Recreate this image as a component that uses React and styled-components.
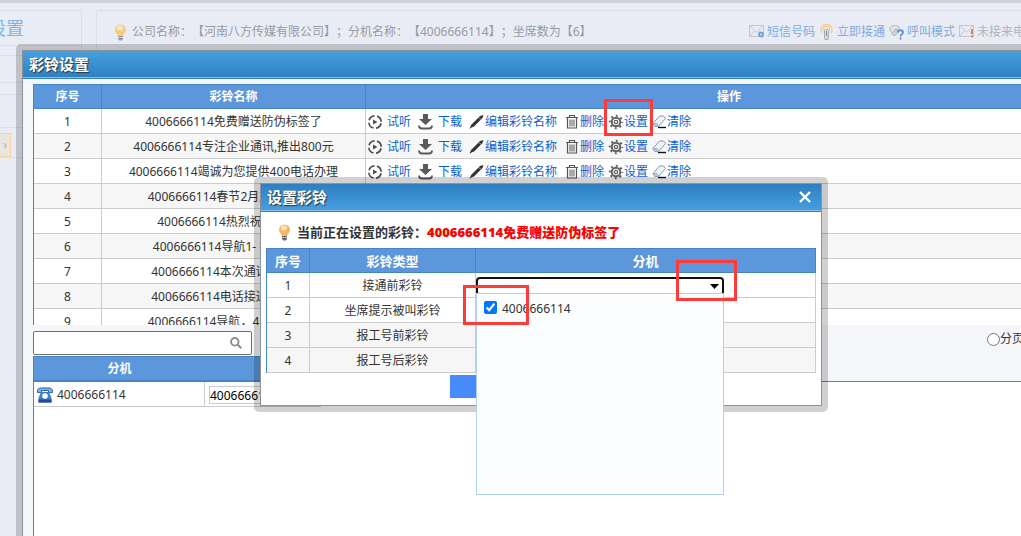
import React from 'react'
import styled, { createGlobalStyle, css } from 'styled-components'

const rings = [
  '4006666114免费赠送防伪标签了',
  '4006666114专注企业通讯,推出800元',
  '4006666114竭诚为您提供400电话办理',
  '4006666114春节2月放假的通知',
  '4006666114热烈祝贺开业啦',
  '4006666114导航1- 按键选择2',
  '4006666114本次通话全程录音',
  '4006666114电话接通请您稍候',
  '4006666114导航，4号键转人工',
]

const ringTypes = ['接通前彩铃', '坐席提示被叫彩铃', '报工号前彩铃', '报工号后彩铃']

const PlayIcon = () => (
  <svg width="16" height="16" viewBox="0 0 16 16" fill="none">
    <circle cx="8" cy="8" r="6.200" stroke="#505050" strokeWidth="1.700" strokeDasharray="7.140 2.600" strokeDashoffset="-1.300" />
    <path d="M6 5.500l4.500 2.500L6 10.500z" fill="#505050" />
  </svg>
)

const DownloadIcon = () => (
  <svg width="19" height="16" viewBox="0 0 19 16" fill="none">
    <path d="M8 0h5v5h4l-6.500 6L4 5h4z" fill="#5a5a5a" />
    <path d="M4 11.500c0 2 1 3 3 3h7c2 0 3-1 3-3" stroke="#5a5a5a" strokeWidth="1.800" />
  </svg>
)

const PenIcon = () => (
  <svg width="19" height="16" viewBox="0 0 19 16">
    <path d="M3.500 15l1.500-4 9-9L17.500 1l-1 3L8 12.500l-2.500 1z" fill="#333" />
    <path d="M13 3.500l2 2" stroke="#fff" strokeWidth="0.600" />
  </svg>
)

const TrashIcon = () => (
  <svg width="19" height="16" viewBox="0 0 19 16" fill="none" stroke="#555">
    <path d="M5 3.500h12M8.500 3V1.500h5V3" strokeWidth="1.200" />
    <path d="M6.500 4v10h9V4" strokeWidth="1.200" />
    <path d="M9 5.500v7M11 5.500v7M13 5.500v7" />
  </svg>
)

const GearIcon = () => (
  <svg width="16" height="16" viewBox="0 0 16 16" fill="none" stroke="#606060">
    <circle cx="8" cy="8" r="6.200" strokeWidth="2" strokeDasharray="1.900 2.970" strokeDashoffset="0.950" />
    <circle cx="8" cy="8" r="4.300" strokeWidth="2" />
    <circle cx="8" cy="8" r="1.700" strokeWidth="1.300" />
  </svg>
)

const EraserIcon = () => (
  <svg width="15" height="16" viewBox="0 0 15 16">
    <path d="M6 13.500h8" stroke="#111" strokeWidth="1.400" />
    <path d="M1 9.500L7.500 2h4l2 2.500-7 8H3z" fill="#eef3f9" stroke="#8497b0" />
    <path d="M1 9.500h4l1.800 3-4 0z" fill="#b9cbe0" stroke="#8497b0" strokeWidth="0.600" />
  </svg>
)

const BulbIcon = ({ faded }) => (
  <svg width="13" height="17" viewBox="0 0 13 17" opacity={faded ? 0.6 : 1}>
    <path d="M6.500 0.500a5.500 5.500 0 0 1 5.500 5.500c0 2.500-2.500 3.500-2.800 6H3.800C3.500 9.500 1 8.500 1 6A5.500 5.500 0 0 1 6.500 0.500z" fill={faded ? '#ffb62e' : '#f2b765'} />
    <ellipse cx="6" cy="4" rx="3" ry="2.500" fill="#fde3b0" />
    <path d="M4 12h5v3l-1.500 1.500h-2L4 15z" fill="#666" />
    <path d="M4 13.500h5" stroke="#bbb" />
  </svg>
)

const MailIcon = ({ alert }) => (
  <svg width="15" height="14" viewBox="0 0 15 14" fill="none">
    <path d="M0.500 0.500h14v11h-14zM0.500 0.500L7.500 7l7-6.500M0.500 11.500l5-6M14.500 11.500l-5-6" stroke="#c3c6cd" />
    {alert ? (
      <path d="M13 4v5M13 10.500v2" stroke="#e08a4a" strokeWidth="2" />
    ) : (
      <circle cx="12" cy="9.500" r="2" stroke="#6fa6de" strokeWidth="2" />
    )}
  </svg>
)

const RemoteIcon = () => (
  <svg width="15" height="16" viewBox="0 0 15 16" fill="none">
    <path d="M3 9a5.500 5.500 0 1 1 9 0M5 7a3 3 0 1 1 5 0" stroke="#f6cf8f" strokeWidth="1.500" />
    <rect x="5.500" y="5.500" width="4" height="10" rx="1" fill="#d5d7dc" stroke="#abaeb5" />
    <path d="M7.500 7v5" stroke="#8d9097" />
  </svg>
)

const CallModeIcon = () => (
  <svg width="15" height="16" viewBox="0 0 15 16" fill="none">
    <path d="M0.500 5c1-4 8-5 10-1l-1.500 2-2-1-2 1.500 1 1.500-2 2z" fill="#dfe1e7" stroke="#b3b6be" />
    <path d="M2.500 10l5-5 2 3-4 4z" fill="#d0d3da" stroke="#b3b6be" />
    <path d="M9 8.500c0-3 5-3 5 0 0 2-2.500 1.500-2.500 4M11.500 13.500v2" stroke="#5d8fd6" strokeWidth="1.800" />
  </svg>
)

const PhoneIcon = () => (
  <svg width="16" height="16" viewBox="0 0 16 16">
    <path d="M0.500 5.500V3l2-2h11l2 2v2.500h-4v-2h-7v2z" fill="#7fb2e6" stroke="#2b66b0" />
    <path d="M4 5h8l2.500 6v4.500h-13V11z" fill="#3f7fca" />
    <path d="M1.500 12.500h13v3h-13z" fill="#24479a" />
    <circle cx="8" cy="9" r="2.800" fill="#fff" />
  </svg>
)

const SearchIcon = () => (
  <svg width="12" height="12" viewBox="0 0 12 12" fill="none" stroke="#8c8c8c">
    <circle cx="4.800" cy="4.800" r="3.800" strokeWidth="1.800" />
    <path d="M7.500 7.500l3.700 3.700" strokeWidth="2" />
  </svg>
)

const actions = [
  { label: '试听', icon: <PlayIcon />, gap: true },
  { label: '下载', icon: <DownloadIcon />, gap: true },
  { label: '编辑彩铃名称', icon: <PenIcon /> },
  { label: '删除', icon: <TrashIcon /> },
  { label: '设置', icon: <GearIcon /> },
  { label: '清除', icon: <EraserIcon /> },
]

function RingTable() {
  return (
    <ScrollStyled>
      <GridStyled>
        <colgroup>
          <col width="68" />
          <col width="264" />
          <col />
        </colgroup>
        <thead>
          <tr>
            <th>序号</th>
            <th>彩铃名称</th>
            <th>操作</th>
          </tr>
        </thead>
        <tbody>
          {rings.map((name, i) => (
            <RowStyled key={name} $shaded={i % 2 === 1}>
              <td>{i + 1}</td>
              <td>{name}</td>
              <td>
                <ActionsStyled>
                  {actions.map(({ label, icon, gap }) => (
                    <ActionStyled key={label} href="#" $gap={gap}>{icon}{label}</ActionStyled>
                  ))}
                </ActionsStyled>
              </td>
            </RowStyled>
          ))}
        </tbody>
      </GridStyled>
    </ScrollStyled>
  )
}

function ExtensionList() {
  return (
    <ExtensionStyled>
      <ExtensionHeadStyled>
        <thead>
          <tr>
            <th>分机</th>
            <td />
          </tr>
        </thead>
      </ExtensionHeadStyled>
      <div className="ext-body">
        <ExtensionRowsStyled>
          <tbody>
            <tr>
              <td><span><PhoneIcon />4006666114</span></td>
              <td><input type="text" aria-label="分机名称" defaultValue="4006666114" /></td>
            </tr>
          </tbody>
        </ExtensionRowsStyled>
      </div>
    </ExtensionStyled>
  )
}

function ExtensionPicker() {
  return (
    <PickerStyled>
      <select aria-label="分机" />
      <svg width="9" height="5" viewBox="0 0 9 5"><path d="M0 0h9L4.500 5z" fill="#000" /></svg>
      <PickerMenuStyled>
        <label>
          <input type="checkbox" defaultChecked />
          4006666114
        </label>
      </PickerMenuStyled>
    </PickerStyled>
  )
}

function App() {
  return (
    <PageStyled>
      <GlobalStyle />
      <ShellStyled>
        <SidebarStyled>
          <div className="side-title"><span>设置</span></div>
          <SideRowStyled $height={10} />
          <SideRowStyled $height={27} />
          <SideRowStyled $height={12} />
          <SideRowStyled $height={33} />
          <button type="button" aria-label="展开">›</button>
        </SidebarStyled>
        <InfoBarStyled>
          <BulbIcon faded />
          <p>公司名称：【河南八方传媒有限公司】；分机名称：【4006666114】；坐席数为【6】</p>
          <ToolbarStyled>
            <a href="#"><MailIcon />短信号码</a>
            <a href="#"><RemoteIcon />立即接通</a>
            <a href="#"><CallModeIcon />呼叫模式</a>
            <a href="#" className="muted"><MailIcon alert />未接来电</a>
          </ToolbarStyled>
        </InfoBarStyled>
      </ShellStyled>

      <MainWindowStyled role="dialog" aria-label="彩铃设置">
        <WindowBoxStyled>
          <TitleBarStyled>
            <h2>彩铃设置</h2>
          </TitleBarStyled>
          <MainBodyStyled>
            <RingTable />
            <FilterBarStyled>
              <div className="search">
                <input type="text" aria-label="搜索" />
                <SearchIcon />
              </div>
              <label>
                <input type="radio" name="paging" />
                分页
              </label>
            </FilterBarStyled>
            <ExtensionList />
          </MainBodyStyled>
        </WindowBoxStyled>
      </MainWindowStyled>

      <SetWindowStyled role="dialog" aria-label="设置彩铃">
        <WindowBoxStyled $white>
          <TitleBarStyled $flipped>
            <h2>设置彩铃</h2>
            <button type="button" aria-label="关闭">
              <svg width="12" height="12" viewBox="0 0 12 12">
                <path d="M1 1l10 10M11 1L1 11" stroke="#fff" strokeWidth="2.400" />
              </svg>
            </button>
          </TitleBarStyled>
          <SetBodyStyled>
            <p>
              <BulbIcon />
              <span>当前正在设置的彩铃：<strong>4006666114免费赠送防伪标签了</strong></span>
            </p>
            <GridStyled $large>
              <colgroup>
                <col width="43" />
                <col width="166" />
                <col />
              </colgroup>
              <thead>
                <tr>
                  <th>序号</th>
                  <th>彩铃类型</th>
                  <th>分机</th>
                </tr>
              </thead>
              <tbody>
                {ringTypes.map((type, i) => (
                  <RowStyled key={type} $shaded={i > 1}>
                    <td>{i + 1}</td>
                    <td>{type}</td>
                    <td>{i === 0 && <ExtensionPicker />}</td>
                  </RowStyled>
                ))}
              </tbody>
            </GridStyled>
            <SaveButtonStyled type="button" aria-label="保存" />
          </SetBodyStyled>
        </WindowBoxStyled>
      </SetWindowStyled>

      <MarkStyled $x={604} $y={99} $w={49} $h={37} />
      <MarkStyled $x={463} $y={285} $w={66} $h={40} />
      <MarkStyled $x={676} $y={260} $w={61} $h={41} />
    </PageStyled>
  )
}

const GlobalStyle = createGlobalStyle`
  *{
    box-sizing: border-box;
  }
  body{
    margin: 0;
    background: #e9ecf5;
    color: #333;
    font-size: 12px;
    line-height: 16px;
    font-family: "Noto Sans", "Noto Sans CJK SC", sans-serif;
    text-spacing-trim: space-all;
  }
  h2, p{
    margin: 0;
  }
  a{
    text-decoration: none;
  }
  input, select, button{
    font: inherit;
  }
  svg{
    display: block;
    flex: none;
  }
`;

const PageStyled = styled.div`
  position: relative;
  min-height: 100vh;
  overflow: hidden;
  border-top: 3px solid #cfd1da;
`;

const ShellStyled = styled.div`
  display: flex;
  align-items: flex-start;
  gap: 14px;
  margin: 7px -4px 0 0;
`;

const SidebarStyled = styled.aside`
  width: 82px;
  border: 1px solid #dcdfe8;
  border-left: 0;
  .side-title{
    display: flex;
    height: 35px;
    align-items: center;
    border-bottom: 1px solid #dcdfe8;
    span{
      margin-left: -12px;
      font-size: 18px;
      color: #80b6e2;
    }
  }
  button{
    display: block;
    width: 11px;
    height: 24px;
    margin-top: 5px;
    padding: 0;
    border: 1px dotted #edc98f;
    border-left: 0;
    background: #e9e5e0;
    color: #aaa;
  }
`;

const SideRowStyled = styled.div`
  height: ${({ $height }) => $height}px;
  border-bottom: 1px solid #dcdfe8;
`;

const InfoBarStyled = styled.header`
  display: flex;
  flex: 1;
  align-items: center;
  height: 44px;
  padding-left: 17px;
  border: 1px solid #dcdfe8;
  border-right: 0;
  white-space: nowrap;
  color: #999ba3;
  p{
    margin-left: 5px;
  }
`;

const ToolbarStyled = styled.nav`
  display: flex;
  gap: 4px;
  margin-left: auto;
  a{
    display: flex;
    align-items: center;
    gap: 3px;
    color: #82abdb;
  }
  .muted{
    color: #b1b4bc;
  }
`;

const windowFrame = css`
  position: absolute;
  display: flex;
  padding: 6px;
  border-radius: 5px;
  background: rgba(0, 0, 0, 0.18);
`;

/* wider and taller than the page, it runs off the right and bottom edges */
const MainWindowStyled = styled.div`
  ${windowFrame}
  inset: 41px -89px -20px 16px;
`;

const SetWindowStyled = styled.div`
  ${windowFrame}
  top: 174px;
  left: 254px;
  width: 574px;
`;

const WindowBoxStyled = styled.div`
  display: flex;
  flex: 1;
  flex-direction: column;
  min-width: 0;
  border: 1px solid #8f9296;
  background: ${({ $white }) => ($white ? '#fff' : '#f5f6f9')};
`;

const TitleBarStyled = styled.div`
  display: flex;
  align-items: center;
  justify-content: space-between;
  height: 28px;
  padding: 0 10px 2px 6px;
  border-bottom: 1px solid #2f7fc0;
  box-shadow: inset 0 -1px #8cc2ea;
  background: ${({ $flipped }) => ($flipped
    ? 'linear-gradient(#2f7fc0, #459fe1)'
    : 'linear-gradient(#469fe1, #2f7fc0)')};
  h2{
    font-size: 15px;
    line-height: 20px;
    color: #fff;
    text-shadow: 1px 1px 1px #333;
  }
  button{
    padding: 0;
    border: 0;
    background: none;
  }
`;

const MainBodyStyled = styled.div`
  display: flex;
  flex: 1;
  flex-direction: column;
  padding: 5px 10px 0;
`;

const SetBodyStyled = styled.div`
  padding: 0 5px 7px;
  p{
    display: flex;
    align-items: center;
    gap: 6px;
    height: 36px;
    padding: 4px 0 0 12px;
    font-size: 13px;
    font-weight: bold;
  }
  strong{
    color: #f00;
  }
`;

const ScrollStyled = styled.div`
  height: 241px;
  overflow: hidden;
`;

const GridStyled = styled.table`
  width: 100%;
  table-layout: fixed;
  border-collapse: separate;
  border-spacing: 0;
  border-left: 1px solid #4485c9;
  text-align: center;
  th{
    height: 25px;
    padding: 0;
    border: solid #4485c9;
    border-width: 1px 1px 1px 0;
    background: #5c97db;
    color: #fff;
    font-size: ${({ $large }) => ($large ? 13 : 12)}px;
  }
  td{
    height: 25px;
    padding: 2px 0 0;
    border: solid #ccc;
    border-width: 0 1px 1px 0;
    white-space: nowrap;
  }
`;

const RowStyled = styled.tr`
  background: ${({ $shaded }) => ($shaded ? '#f6f6f6' : '#fff')};
`;

const ActionsStyled = styled.div`
  display: flex;
  gap: 4px;
  padding-left: 1px;
`;

const ActionStyled = styled.a`
  display: flex;
  align-items: center;
  gap: ${({ $gap }) => ($gap ? 4 : 0)}px;
  color: #0a62cc;
`;

const FilterBarStyled = styled.div`
  display: flex;
  justify-content: space-between;
  padding: 6px 69px 1px 0;
  .search{
    display: flex;
    align-items: center;
    width: 219px;
    height: 24px;
    padding-right: 9px;
    border: 1px solid #707070;
    border-radius: 2px;
    background: #fff;
    input{
      flex: 1;
      min-width: 0;
      border: 0;
      outline: 0;
      background: none;
    }
  }
  label{
    display: flex;
    align-items: center;
    height: 16px;
  }
  label input{
    width: 13px;
    height: 13px;
    margin: 0;
  }
`;

const ExtensionStyled = styled.div`
  display: flex;
  flex: 1;
  flex-direction: column;
  .ext-body{
    flex: 1;
    border: solid #4485c9;
    border-width: 1px 0 0 1px;
    background: #fff;
  }
`;

const ExtensionHeadStyled = styled.table`
  width: 288px;
  table-layout: fixed;
  border-spacing: 0;
  background: #5c97db;
  border: 1px solid #4485c9;
  color: #fff;
  th{
    width: 171px;
    height: 23px;
    padding: 0;
  }
`;

const ExtensionRowsStyled = styled.table`
  width: 287px;
  table-layout: fixed;
  border-spacing: 0;
  td{
    height: 25px;
    padding: 2px 3px 0;
    border-bottom: 1px solid #ccc;
  }
  td:first-child{
    width: 171px;
    border-right: 1px solid #ccc;
  }
  span{
    display: flex;
    align-items: center;
    gap: 4px;
  }
  input{
    display: block;
    width: 100px;
    height: 18px;
    margin-left: 1px;
    padding: 0;
    border: 1px solid #ccc;
  }
`;

const PickerStyled = styled.div`
  position: relative;
  width: 248px;
  height: 19px;
  select{
    display: block;
    width: 100%;
    height: 19px;
    appearance: none;
    border: 2px solid #101010;
    border-radius: 4px;
    background: #fff;
  }
  > svg{
    position: absolute;
    top: 7px;
    right: 5px;
  }
`;

const PickerMenuStyled = styled.div`
  position: absolute;
  top: 16px;
  left: 0;
  width: 248px;
  height: 202px;
  padding: 7px;
  border: 1px solid #b0d0ee;
  background: #fcfdff;
  label{
    display: flex;
    gap: 5px;
  }
  input{
    width: 13px;
    height: 13px;
    margin: 0;
  }
`;

const SaveButtonStyled = styled.button`
  display: block;
  width: 182px;
  height: 23px;
  margin: 2px auto 0;
  border: 0;
  background: #478af9;
`;

const MarkStyled = styled.div`
  position: absolute;
  left: ${({ $x }) => $x}px;
  top: ${({ $y }) => $y - 3}px;
  width: ${({ $w }) => $w}px;
  height: ${({ $h }) => $h}px;
  border: 3px solid #fd3b39;
  pointer-events: none;
`;

export default App;
